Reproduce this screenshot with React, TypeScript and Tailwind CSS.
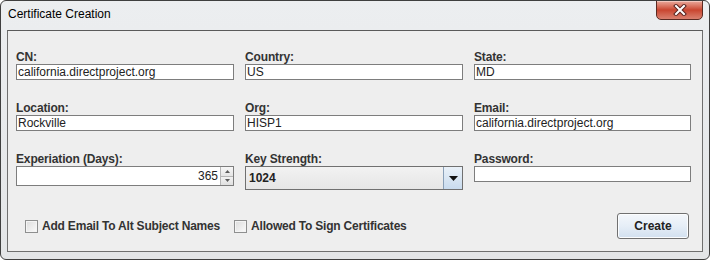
import React from "react";

const font = { fontFamily: '"Liberation Sans", Arial, sans-serif' };

function Label({ children }: { children: React.ReactNode }) {
  return (
    <div className="h-[15px] text-[12px] leading-[17px] font-bold tracking-[-0.15px] text-[#333333] whitespace-nowrap">
      {children}
    </div>
  );
}

function Field({ value }: { value?: string }) {
  return (
    <div className="h-[16px] border border-[#7d7d7d] bg-white pl-[1px] text-[12px] leading-[14px] text-[#222222] whitespace-nowrap overflow-hidden">
      {value}
    </div>
  );
}

function Cell({ label, value }: { label: string; value?: string }) {
  return (
    <div className="flex flex-col">
      <Label>{label}</Label>
      <Field value={value} />
    </div>
  );
}

function CheckBox() {
  return (
    <div className="w-[13px] h-[13px] border border-[#8e8f8f] bg-gradient-to-br from-[#dcdcdc] to-[#fbfbfb] shadow-[inset_0_0_0_1px_#f4f4f4]" />
  );
}

export default function App() {
  return (
    <div style={font} className="w-[710px] h-[260px] bg-white">
      <div className="w-[710px] h-[260px] rounded-[6px] border border-[#3f3f3f] bg-gradient-to-b from-[#eceef0] to-[#e3e5e7] flex flex-col relative overflow-hidden">
        {/* title bar */}
        <div className="h-[29px] flex items-start pl-[7px] pt-[6px] text-[12px] leading-[15px] text-black">
          Certificate Creation
        </div>
        {/* close button */}
        <div className="absolute left-[655px] top-[-1px] w-[47px] h-[20px] rounded-b-[5px] border border-[#5b2a22] bg-gradient-to-b from-[#e9a99c] via-[#c9452f] to-[#d9806f] flex items-center justify-center shadow-[inset_0_1px_0_#f3c7bd]">
          <svg width="14" height="12" viewBox="0 0 14 12">
            <path d="M3 2 L11 10 M11 2 L3 10" stroke="#5a2520" strokeWidth="4" strokeLinecap="square" />
            <path d="M3 2 L11 10 M11 2 L3 10" stroke="#ffffff" strokeWidth="2" strokeLinecap="square" />
          </svg>
        </div>
        {/* content */}
        <div className="mx-[6px] mb-[6px] h-[222px] border border-[#6f6f6f] border-t-[#5a5a5a] bg-[#eeeeee] flex flex-col pl-[8px] pr-[13px] pt-[18px]">
          <div className="grid grid-cols-[218px_218px_217px] gap-x-[11px] gap-y-[20px]">
            <Cell label="CN:" value="california.directproject.org" />
            <Cell label="Country:" value="US" />
            <Cell label="State:" value="MD" />
            <Cell label="Location:" value="Rockville" />
            <Cell label="Org:" value="HISP1" />
            <Cell label="Email:" value="california.directproject.org" />
            <div className="flex flex-col">
              <Label>Experiation (Days):</Label>
              <div className="h-[20px] flex border border-[#7d7d7d] bg-white">
                <div className="flex-1 text-right pr-[2px] text-[12px] leading-[18px] text-[#222222]">365</div>
                <div className="w-[13px] flex flex-col border-l border-[#b5b5b5]">
                  <div className="flex-1 flex items-center justify-center bg-gradient-to-b from-[#f7f7f7] to-[#e5e5e5] border-b border-[#b5b5b5]">
                    <svg width="5" height="3" viewBox="0 0 5 3"><path d="M0 3 L2.5 0 L5 3 Z" fill="#5a5a5a" /></svg>
                  </div>
                  <div className="flex-1 flex items-center justify-center bg-gradient-to-b from-[#f2f2f2] to-[#e0e0e0]">
                    <svg width="5" height="3" viewBox="0 0 5 3"><path d="M0 0 L5 0 L2.5 3 Z" fill="#5a5a5a" /></svg>
                  </div>
                </div>
              </div>
            </div>
            <div className="flex flex-col">
              <Label>Key Strength:</Label>
              <div className="h-[24px] flex border border-[#707070] bg-gradient-to-b from-[#f2f2f2] to-[#e6e6e6]">
                <div className="flex-1 pl-[3px] text-[12px] leading-[22px] font-bold text-[#222222]">1024</div>
                <div className="w-[19px] flex items-center justify-center border-l border-[#8aa0b8] bg-gradient-to-b from-[#eaf1f8] to-[#c9dbee]">
                  <svg width="9" height="5" viewBox="0 0 9 5"><path d="M0 0 L9 0 L4.5 5 Z" fill="#111111" /></svg>
                </div>
              </div>
            </div>
            <Cell label="Password:" value="" />
          </div>
          <div className="mt-[23px] flex items-center">
            <div className="ml-[9px] flex items-center gap-[4px]">
              <CheckBox />
              <span className="text-[12px] leading-[15px] font-bold tracking-[-0.2px] text-[#333333]">Add Email To Alt Subject Names</span>
            </div>
            <div className="ml-[14px] flex items-center gap-[4px]">
              <CheckBox />
              <span className="text-[12px] leading-[15px] font-bold tracking-[-0.2px] text-[#333333]">Allowed To Sign Certificates</span>
            </div>
            <div className="ml-auto w-[72px] h-[26px] rounded-[3px] border border-[#707070] bg-gradient-to-b from-[#f4f7fb] via-[#e6eef7] to-[#d2e0ef] flex items-center justify-center text-[12px] font-bold text-[#222222] shadow-[inset_0_0_0_1px_#fcfdfe]">
              Create
            </div>
          </div>
        </div>
      </div>
    </div>
  );
}
